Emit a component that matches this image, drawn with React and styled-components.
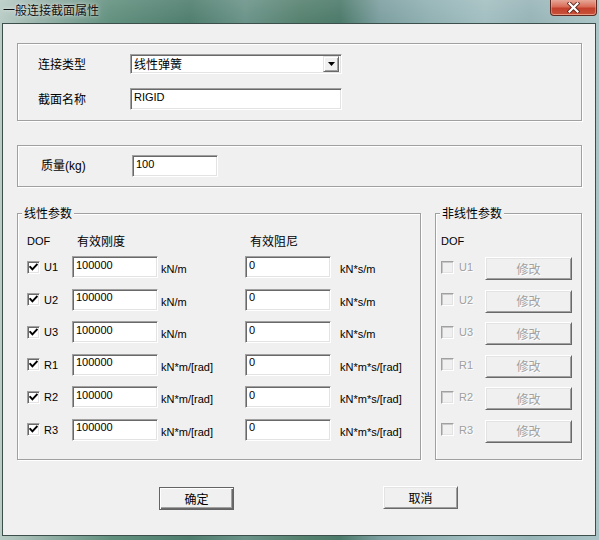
import React from 'react';
import styled, { createGlobalStyle } from 'styled-components';

const FONT = `"Liberation Sans", "Noto Sans CJK SC", sans-serif`;
const CJK = `"Noto Sans CJK SC", "Liberation Sans", sans-serif`;

const Global = createGlobalStyle`
  html, body { margin: 0; padding: 0; width: 599px; height: 540px; overflow: hidden; }
  body { font-family: ${FONT}; font-size: 12px; color: #000; background: #9ab6b4; }
  #root { width: 599px; height: 540px; }
  * { box-sizing: border-box; }
`;

const Window = styled.div`
  width: 599px;
  height: 540px;
  display: flex;
  flex-direction: column;
  background:
    linear-gradient(180deg, rgba(255,255,255,0.10) 0px, rgba(255,255,255,0) 23px),
    linear-gradient(90deg, #b9ccc6 0px, #95b1a8 45px, #62907f 110px, #4f7e6e 190px, #6b9389 245px, #56816f 300px, #4c7a6a 340px, #7d9fa0 380px, #91b1b3 430px, #a3bfc1 485px, #97b4b7 530px, #abc5c7 599px);
`;

const TitleBar = styled.div`
  height: 23px;
  display: flex;
  align-items: flex-start;
  justify-content: space-between;
`;

const TitleText = styled.div`
  padding: 3px 0 0 3px;
  font-family: ${CJK};
  font-size: 12px;
  line-height: 14px;
  color: #101010;
  text-shadow: 0 0 5px rgba(255, 255, 255, 0.7), 0 0 2px rgba(255, 255, 255, 0.5);
`;

const CloseButton = styled.div`
  width: 47px;
  height: 16px;
  margin-right: 2px;
  border: 1px solid #5e2a22;
  border-top: none;
  border-radius: 0 0 4px 4px;
  background: linear-gradient(180deg, #e7a797 0%, #d86c57 45%, #c3412c 55%, #c8523a 100%);
  box-shadow: inset 0 -1px 0 rgba(255, 200, 180, 0.6), inset 1px 0 0 rgba(255,190,170,0.4), inset -1px 0 0 rgba(255,190,170,0.4);
  display: flex;
  align-items: center;
  justify-content: center;
`;

const Client = styled.div`
  flex: 1;
  margin: 0 3px 4px 2px;
  border: 1px solid #3d4f4b;
  background: #f0f0f0;
  padding: 19px 13px 0 14px;
  display: flex;
  flex-direction: column;
`;

const GroupBox = styled.div`
  position: relative;
  margin-top: ${(p) => p.$mt || 0}px;
  width: ${(p) => (p.$w ? `${p.$w}px` : 'auto')};
  height: ${(p) => p.$h}px;
  border: 1px solid #a0a0a0;
  box-shadow: inset 1px 1px 0 #ffffff, 1px 1px 0 #ffffff;
`;

const Legend = styled.span`
  position: absolute;
  top: -8px;
  left: 4px;
  padding: 0 2px;
  background: #f0f0f0;
  font-family: ${CJK};
  font-size: 12px;
  line-height: 14px;
`;

const FormGrid = styled.div`
  display: grid;
  grid-template-columns: ${(p) => p.$cols};
  row-gap: 14px;
  align-items: center;
  padding: ${(p) => p.$pad};
`;

const Label = styled.span`
  font-family: ${(p) => (p.$cjk ? CJK : FONT)};
  font-size: 12px;
  line-height: 14px;
`;

const Field = styled.input`
  display: block;
  width: ${(p) => p.$w}px;
  height: ${(p) => p.$h || 22}px;
  margin: 0;
  padding: 0 3px ${(p) => p.$pb ?? 5}px;
  font-family: ${FONT};
  font-size: ${(p) => p.$fs || 11}px;
  color: #000;
  background: #fff;
  border-style: solid;
  border-width: 1px;
  border-color: #a0a0a0 #ffffff #ffffff #a0a0a0;
  box-shadow: inset 1px 1px 0 #696969, inset -1px -1px 0 #e3e3e3;
  outline: none;
`;

const Combo = styled.div`
  width: 212px;
  height: 20px;
  display: flex;
  align-items: center;
  justify-content: space-between;
  padding: 0 2px 0 3px;
  background: #fff;
  border-style: solid;
  border-width: 1px;
  border-color: #a0a0a0 #ffffff #ffffff #a0a0a0;
  box-shadow: inset 1px 1px 0 #696969, inset -1px -1px 0 #e3e3e3;
  font-family: ${CJK};
  font-size: 12px;
  line-height: 14px;
`;

const DropButton = styled.div`
  width: 16px;
  height: 16px;
  background: #f0f0f0;
  border-style: solid;
  border-width: 1px;
  border-color: #e3e3e3 #696969 #696969 #e3e3e3;
  box-shadow: inset 1px 1px 0 #ffffff, inset -1px -1px 0 #a0a0a0;
  display: flex;
  align-items: center;
  justify-content: center;
`;

const GroupRow = styled.div`
  display: flex;
  gap: 14px;
  margin-top: 26px;
`;

const ParamGrid = styled.div`
  display: grid;
  grid-template-columns: ${(p) => p.$cols};
  grid-template-rows: 16px repeat(6, 22px);
  row-gap: 10.5px;
  padding: 15.5px 0 0 ${(p) => p.$pl}px;
`;

const HeadCell = styled.div`
  padding: 4px 0 0 ${(p) => p.$pl || 0}px;
  font-family: ${(p) => (p.$cjk ? CJK : FONT)};
  font-size: ${(p) => (p.$cjk ? 12 : 11)}px;
  line-height: 14px;
  white-space: nowrap;
`;

const CheckCell = styled.label`
  display: flex;
  align-items: center;
  gap: ${(p) => p.$gap || 4}px;
  font-family: ${FONT};
  font-size: 11px;
  color: ${(p) => (p.$disabled ? '#a0a0a0' : '#000')};
  text-shadow: ${(p) => (p.$disabled ? '1px 1px 0 #ffffff' : 'none')};
`;

const Box = styled.span`
  width: 13px;
  height: 13px;
  flex: none;
  display: flex;
  align-items: center;
  justify-content: center;
  background: ${(p) => (p.$disabled ? '#f0f0f0' : '#ffffff')};
  border-style: solid;
  border-width: 1px;
  border-color: #a0a0a0 #ffffff #ffffff #a0a0a0;
  box-shadow: inset 1px 1px 0 ${(p) => (p.$disabled ? '#c8c8c8' : '#696969')}, inset -1px -1px 0 #e3e3e3;
`;

const Unit = styled.span`
  align-self: start;
  padding: 7px 0 0 ${(p) => p.$pl}px;
  font-family: ${FONT};
  font-size: 11px;
  line-height: 13px;
  white-space: nowrap;
`;

const Button = styled.button`
  width: ${(p) => p.$w}px;
  height: 23px;
  margin: ${(p) => p.$mt || 0}px 0 0;
  padding: 0;
  align-self: start;
  background: #f0f0f0;
  font-family: ${CJK};
  font-size: 12px;
  line-height: 14px;
  color: ${(p) => (p.disabled ? '#a0a0a0' : '#000')};
  text-shadow: ${(p) => (p.disabled ? '1px 1px 0 #ffffff' : 'none')};
  border-style: solid;
  border-width: 1px;
  border-color: ${(p) =>
    p.$default ? '#646464' : '#ffffff #696969 #696969 #ffffff'};
  box-shadow: ${(p) =>
    p.$default
      ? 'inset 1px 1px 0 #ffffff, inset -1px -1px 0 #696969, inset -2px -2px 0 #a0a0a0'
      : 'inset 1px 1px 0 #e3e3e3, inset -1px -1px 0 #a0a0a0'};
  cursor: default;
`;

const ButtonRow = styled.div`
  display: flex;
  align-items: flex-start;
  gap: 149px;
  margin-top: 26px;
  padding-left: 142px;
`;

const CheckMark = () => (
  <svg width="9" height="9" viewBox="0 0 9 9">
    <path d="M1.2 4 L3.4 6.4 L7.8 1.6" fill="none" stroke="#000" strokeWidth="1.9" strokeLinecap="square" />
  </svg>
);

const CloseGlyph = () => (
  <svg width="13" height="11" viewBox="0 0 13 11">
    <path d="M2.5 1.5 L10.5 9.5 M10.5 1.5 L2.5 9.5" stroke="#4a1a12" strokeWidth="4" strokeLinecap="square" opacity="0.8" />
    <path d="M2.5 1.5 L10.5 9.5 M10.5 1.5 L2.5 9.5" stroke="#ffffff" strokeWidth="2.2" strokeLinecap="square" />
  </svg>
);

const Arrow = () => (
  <svg width="7" height="4" viewBox="0 0 7 4">
    <path d="M0 0 H7 L3.5 4 Z" fill="#000" />
  </svg>
);

const rows = [
  { dof: 'U1', k: 'kN/m', c: 'kN*s/m' },
  { dof: 'U2', k: 'kN/m', c: 'kN*s/m' },
  { dof: 'U3', k: 'kN/m', c: 'kN*s/m' },
  { dof: 'R1', k: 'kN*m/[rad]', c: 'kN*m*s/[rad]' },
  { dof: 'R2', k: 'kN*m/[rad]', c: 'kN*m*s/[rad]' },
  { dof: 'R3', k: 'kN*m/[rad]', c: 'kN*m*s/[rad]' },
];

export default function App() {
  return (
    <>
      <Global />
      <Window>
        <TitleBar>
          <TitleText>一般连接截面属性</TitleText>
          <CloseButton>
            <CloseGlyph />
          </CloseButton>
        </TitleBar>
        <Client>
          <GroupBox $h={78}>
            <FormGrid $cols="92px 212px" $pad="10px 0 0 20px">
              <Label $cjk>连接类型</Label>
              <Combo>
                <span>线性弹簧</span>
                <DropButton>
                  <Arrow />
                </DropButton>
              </Combo>
              <Label $cjk>截面名称</Label>
              <Field $w={212} readOnly value="RIGID" />
            </FormGrid>
          </GroupBox>

          <GroupBox $h={42} $mt={24}>
            <FormGrid $cols="91px 86px" $pad="9px 0 0 23px">
              <Label>质量(kg)</Label>
              <Field $w={86} readOnly value="100" />
            </FormGrid>
          </GroupBox>

          <GroupRow>
            <GroupBox $w={404} $h={247}>
              <Legend>线性参数</Legend>
              <ParamGrid $cols="45px 86px 87px 86px 1fr" $pl={9}>
                <HeadCell>DOF</HeadCell>
                <HeadCell $pl={5} $cjk>有效刚度</HeadCell>
                <HeadCell />
                <HeadCell $pl={5} $cjk>有效阻尼</HeadCell>
                <HeadCell />
                {rows.map((r) => (
                  <React.Fragment key={r.dof}>
                    <CheckCell>
                      <Box>
                        <CheckMark />
                      </Box>
                      {r.dof}
                    </CheckCell>
                    <Field $w={86} readOnly value="100000" />
                    <Unit $pl={3}>{r.k}</Unit>
                    <Field $w={86} readOnly value="0" />
                    <Unit $pl={9}>{r.c}</Unit>
                  </React.Fragment>
                ))}
              </ParamGrid>
            </GroupBox>

            <GroupBox $w={147} $h={247}>
              <Legend>非线性参数</Legend>
              <ParamGrid $cols="44px 87px" $pl={5}>
                <HeadCell>DOF</HeadCell>
                <HeadCell />
                {rows.map((r) => (
                  <React.Fragment key={r.dof}>
                    <CheckCell $disabled $gap={5}>
                      <Box $disabled />
                      {r.dof}
                    </CheckCell>
                    <Button $w={87} $mt={1} disabled>
                      修改
                    </Button>
                  </React.Fragment>
                ))}
              </ParamGrid>
            </GroupBox>
          </GroupRow>

          <ButtonRow>
            <Button $w={75} $mt={1} $default>
              确定
            </Button>
            <Button $w={75}>取消</Button>
          </ButtonRow>
        </Client>
      </Window>
    </>
  );
}
